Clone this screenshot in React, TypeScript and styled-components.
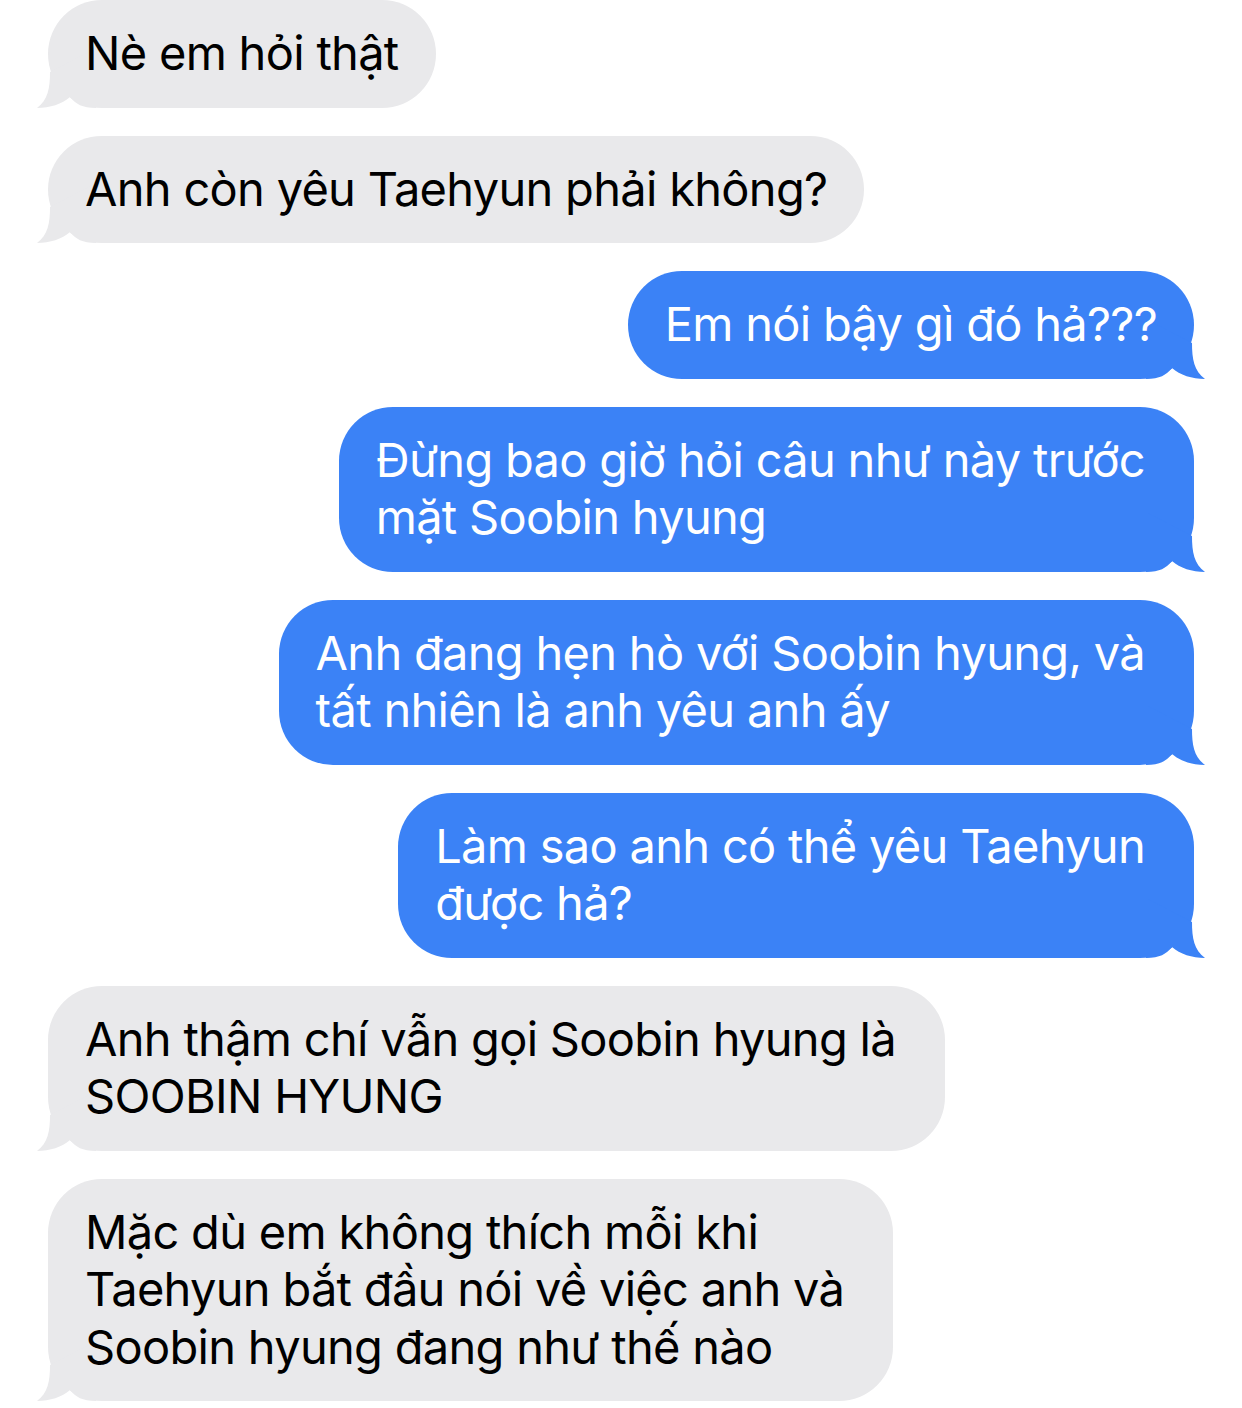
import styled, { createGlobalStyle } from 'styled-components'

const GlobalStyle = createGlobalStyle`
  html, body {
    margin: 0;
    padding: 0;
    background: #ffffff;
  }
  body {
    font-family: Inter, "Noto Sans", sans-serif;
    -webkit-font-smoothing: antialiased;
  }
`

const Thread = styled.div`
  display: flex;
  flex-direction: column;
  gap: 28px;
  width: 1242px;
  padding: 0 48px;
  box-sizing: border-box;
`

const Bubble = styled.div<{ $fromMe?: boolean; $wrapped?: boolean }>`
  position: relative;
  z-index: 0;
  align-self: ${({ $fromMe }) => ($fromMe ? 'flex-end' : 'flex-start')};
  padding: 24px ${({ $wrapped }) => ($wrapped ? '49px' : '37px')} 26px 37px;
  border-radius: 54px;
  background: ${({ $fromMe }) => ($fromMe ? '#3b82f6' : '#e9e9eb')};
  color: ${({ $fromMe }) => ($fromMe ? '#ffffff' : '#000000')};
  font-size: 47px;
  line-height: 57.5px;
  letter-spacing: -0.7px;
  white-space: nowrap;
`

const Tail = styled.svg<{ $fromMe?: boolean }>`
  position: absolute;
  z-index: -1;
  bottom: 0;
  width: 60px;
  height: 60px;
  ${({ $fromMe }) => ($fromMe ? 'right: -12px; transform: scaleX(-1);' : 'left: -12px;')}
`

const messages: { fromMe: boolean; lines: string[] }[] = [
  { fromMe: false, lines: ['Nè em hỏi thật'] },
  { fromMe: false, lines: ['Anh còn yêu Taehyun phải không?'] },
  { fromMe: true, lines: ['Em nói bậy gì đó hả???'] },
  { fromMe: true, lines: ['Đừng bao giờ hỏi câu như này trước', 'mặt Soobin hyung'] },
  { fromMe: true, lines: ['Anh đang hẹn hò với Soobin hyung, và', 'tất nhiên là anh yêu anh ấy'] },
  { fromMe: true, lines: ['Làm sao anh có thể yêu Taehyun', 'được hả?'] },
  { fromMe: false, lines: ['Anh thậm chí vẫn gọi Soobin hyung là', 'SOOBIN HYUNG'] },
  {
    fromMe: false,
    lines: ['Mặc dù em không thích mỗi khi', 'Taehyun bắt đầu nói về việc anh và', 'Soobin hyung đang như thế nào'],
  },
]

function Message({ fromMe, lines }: { fromMe: boolean; lines: string[] }) {
  return (
    <Bubble $fromMe={fromMe} $wrapped={lines.length > 1}>
      <Tail $fromMe={fromMe} viewBox="0 0 60 60" fill={fromMe ? '#3b82f6' : '#e9e9eb'}>
        <path d="M60 0 L14 24 C14 40 12 52 1 60 C14 60 26 56 34 49 C40 56 46 60 60 60 Z" />
      </Tail>
      {lines.map((line, i) => (
        <div key={i}>{line}</div>
      ))}
    </Bubble>
  )
}

export default function App() {
  return (
    <>
      <GlobalStyle />
      <Thread>
        {messages.map((m, i) => (
          <Message key={i} {...m} />
        ))}
      </Thread>
    </>
  )
}
